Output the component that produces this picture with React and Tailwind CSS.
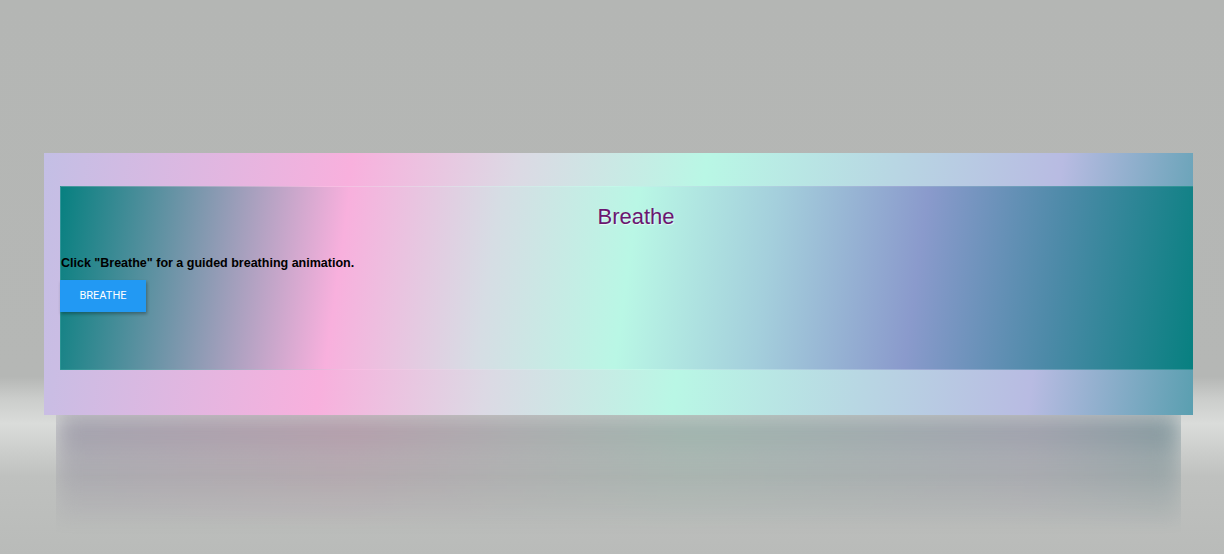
const cardGradient =
  "bg-[linear-gradient(98deg,#c3bfe5_0%,#f8b0dd_26%,#dcd9e4_40%,#b9f7e5_56%,#b8d6e3_72%,#b8bbe2_86%,#5a9fb0_100%)]";

const Reflection = () => (
  <div className="mx-[12px] h-[120px] overflow-visible">
    <div
      className={`h-full w-full ${cardGradient} opacity-65 brightness-[0.6] blur-[12px] [mask-image:linear-gradient(to_bottom,black_0%,rgba(0,0,0,0.55)_35%,transparent_100%)]`}
    />
  </div>
);

const App = () => {
  return (
    <div
      className="h-[554px] w-full overflow-hidden pt-[153px] pl-[44px] pr-[31px] bg-[linear-gradient(to_bottom,#b4b6b4_0%,#b5b7b5_68%,#cbcdcb_72%,#dadcda_76.5%,#cdcfcd_81%,#bfc1bf_86%,#b9bbb9_100%)]"
      style={{ fontFamily: '"Liberation Sans", Arial, sans-serif' }}
    >
      {/* card */}
      <div className={`h-[262px] pt-[33px] pl-4 ${cardGradient}`}>
        {/* breathing panel */}
        <div className="h-[184px] border border-r-0 border-white/15 bg-[linear-gradient(98deg,#078080_0%,#f8b0dd_25%,#d6dde4_38%,#b9f7e5_50%,#a4cfdc_62%,#8a9acc_75%,#4d8aa8_87%,#078080_100%)]">
          <h1 className="pt-[17px] pl-[18px] text-center text-[22px] leading-[25px] text-[#6b1670] [text-shadow:1px_1px_1px_rgba(255,255,255,0.7)]">
            Breathe
          </h1>
          <p className="mt-[27px] text-[12.5px] leading-[15px] font-bold text-black">
            Click "Breathe" for a guided breathing animation.
          </p>
          <button
            className="mt-[9px] -ml-px flex h-[32px] w-[86px] items-center justify-center bg-[#2299f3] text-[11px] text-white shadow-[1px_2px_3px_rgba(0,0,0,0.3)]"
            style={{ fontFamily: "Roboto, Arial, sans-serif" }}
          >
            BREATHE
          </button>
        </div>
      </div>
      <Reflection />
    </div>
  );
};

export default App;
